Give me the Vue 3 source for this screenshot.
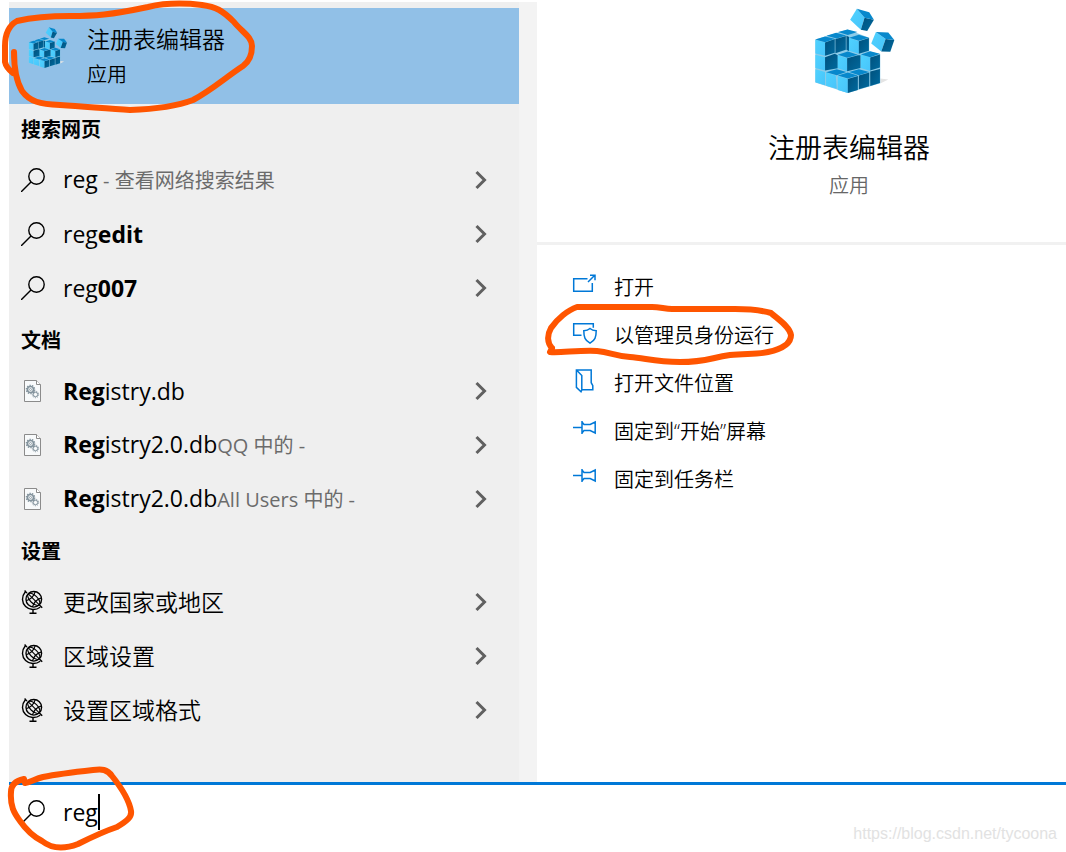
<template>
  <div class="page">
    <svg class="defs" aria-hidden="true">
      <symbol id="regedit" viewBox="75 25 245 260">
        <path fill="#e4e4e4" d="M273 236l24 3-24 12z" />
        <path fill="#8ccbe8" d="M79 119L175 89l65 25v40l33 9v87l-97 29-97-31z" />
        <polygon v-for="(f, i) in cubeFaces" :key="i" :points="f.points" :fill="f.fill" />
      </symbol>
      <linearGradient id="face-light" x1="0" y1="0" x2="1" y2="1">
        <stop offset="0" stop-color="#4fd2ff" />
        <stop offset="1" stop-color="#48c4fa" />
      </linearGradient>
      <linearGradient id="face-dark" x1="0" y1="0" x2="1" y2="1">
        <stop offset="0" stop-color="#00507c" />
        <stop offset="1" stop-color="#006a9f" />
      </linearGradient>

      <symbol id="search" viewBox="0 0 24 24">
        <g fill="none" stroke="#000" stroke-width="1.4">
          <circle cx="15.5" cy="8.5" r="7.7" />
          <path d="M10 14L0 24" />
        </g>
      </symbol>

      <symbol id="file" viewBox="0 0 24 24">
        <path fill="#f8fafb" stroke="#8b8b8b" d="M3.5 1.5h12l4 4v17h-16z" />
        <path fill="#fff" stroke="#8b8b8b" d="M15.5 1.5v4h4" />
        <g fill="none" stroke="#82929c">
          <circle cx="9.5" cy="10.5" r="3" stroke-width="1.6" />
          <circle cx="9.5" cy="10.5" r="4.2" stroke-width="1.2" stroke-dasharray="1.4 1.2" />
          <circle cx="9.5" cy="10.5" r="1" stroke-width=".8" />
          <circle cx="14.5" cy="15.5" r="2.2" stroke-width="1" />
          <circle cx="14.5" cy="15.5" r="3.2" stroke-width="1" stroke-dasharray="1.2 1" />
        </g>
      </symbol>

      <symbol id="globe" viewBox="0 0 24 24">
        <g fill="none" stroke="#000" stroke-width="1.1">
          <circle cx="12.800" cy="9.300" r="7.800" stroke-width="1.4" />
          <path stroke-width="1.4" d="M3.600 .5l2.400 2.600M4.200 2C.4 6.500.6 12.500 4.600 16.400c4 3.800 10 4.200 14.600.8M18.400 15l2.800 2.800M12 19.400v3.800M8.500 23.200h7" />
          <path d="M7.300 3.800l11 11" />
          <ellipse cx="12.800" cy="9.300" rx="7.800" ry="3.800" transform="rotate(45 12.8 9.3)" />
          <path d="M14.200 1.700Q12.500 8.500 5.200 10.700M20.400 7.900Q13.500 10 11.400 17" />
        </g>
      </symbol>

      <symbol id="open" viewBox="0 0 26 26">
        <g fill="none" stroke="#0078d7" stroke-width="1.5">
          <path d="M15.500 5.700H1.700v12.600h18.600V10" />
          <path d="M16 9L22.500 2.500M18 2.300h5v5" />
        </g>
      </symbol>

      <symbol id="admin" viewBox="0 0 26 26">
        <g fill="none" stroke="#0078d7" stroke-width="1.5">
          <path d="M9.500 14.200H1.700V2.700h19.600v4" />
          <path d="M18 7.500c-2 1.800-4 2.200-6.200 2.300 0 6.500 1.200 9.400 6.200 12.400 5-3 6.200-5.900 6.200-12.400-2.200-.1-4.200-.5-6.200-2.300z" />
        </g>
      </symbol>

      <symbol id="folder" viewBox="0 0 26 26">
        <g fill="none" stroke="#0078d7" stroke-width="1.500">
          <path d="M9.500 20.700h11.300v-4l-1.600-3V.9H4.400v17.500l4.600 4.400.8-1.800V6.500L4.700 1.200" />
        </g>
      </symbol>

      <symbol id="pin" viewBox="0 0 26 26">
        <path fill="none" stroke="#0078d7" stroke-width="1.500" d="M1 10.500h9M10 4v13M10 5l2 2.500h6.200l5-2.500v11l-5-2.500H12L10 16" />
      </symbol>
    </svg>

    <main class="results">
      <section class="list">
        <button class="best" type="button">
          <svg class="best-icon"><use href="#regedit" /></svg>
          <span class="best-text">
            <span class="best-name">注册表编辑器</span>
            <span class="best-kind">应用</span>
          </span>
          <svg class="mark mark-best" viewBox="0 0 260 116">
            <path d="M14 52C14 66 15 79 22 91C30 102 40 104 60 105C90 107 110 109 130 110C160 109 180 105 193 100C212 90 226 77 243 66C250 61 252 55 252 46C252 37 242 32 234 22C222 10 216 7 202 5C185 3 165 3 148 7C110 15 95 16 70 16C48 16 30 18 17 21C8 26 5 34 5 46V62C6 67 9 70 13 73" />
          </svg>
        </button>

        <template v-for="group in groups" :key="group.title">
          <h2 class="group-title">{{ group.title }}</h2>
          <button v-for="(item, i) in group.items" :key="i" class="row" type="button">
            <svg class="row-icon"><use :href="'#' + group.icon" /></svg>
            <span class="row-text" :class="{ chinese: group.icon === 'globe' }">
              <span v-for="(part, j) in item" :key="j" :class="part.style">{{ part.text }}</span>
            </span>
            <svg class="chevron" viewBox="0 0 12 20">
              <path d="M1.500 2l8 8-8 8" />
            </svg>
          </button>
        </template>
      </section>

      <section class="detail">
        <header class="hero">
          <svg class="hero-icon"><use href="#regedit" /></svg>
          <h1 class="hero-name">注册表编辑器</h1>
          <p class="hero-kind">应用</p>
        </header>
        <div class="actions">
          <button v-for="action in actions" :key="action.label" class="action" type="button">
            <svg class="action-icon"><use :href="'#' + action.icon" /></svg>
            <span>{{ action.label }}</span>
            <svg v-if="action.marked" class="mark mark-action" viewBox="540 300 260 70">
              <path d="M552 348L550 352C560 353 580 350 597 351C610 352 615 356 630 357C645 358 655 362 680 362C705 362 710 358 730 355C745 353 755 355 768 352C782 349 791 343 791 335C790 327 779 320 771 313C757 309 745 309 735 309H672C665 309 660 307 652 307H577C568 310 557 319 551 328C547 335 547 343 552 348" />
            </svg>
          </button>
        </div>
      </section>
    </main>

    <footer class="search-bar">
      <label class="search-label" for="query" aria-label="搜索">
        <svg class="row-icon"><use href="#search" /></svg>
      </label>
      <input id="query" v-model="query" class="search-input" type="text" autocomplete="off" spellcheck="false" />
      <span class="caret"></span>
      <svg class="mark mark-search" viewBox="0 760 140 92">
        <path d="M24 779C15 781 11 785 11 792C10 806 14 813 20 821C27 831 34 837 42 841C52 849 65 849 78 844C92 837 105 831 117 827C127 821 132 817 131 811C129 799 120 786 112 776C107 769 102 769 93 770C75 772 58 774 43 777C35 779 31 782 25 783" />
      </svg>
      <span class="watermark">https://blog.csdn.net/tycoona</span>
    </footer>
  </div>
</template>

<script setup>
import { ref } from 'vue'

const query = ref('reg')

const groups = [
  {
    title: '搜索网页',
    icon: 'search',
    items: [
      [{ text: 'reg' }, { text: ' - 查看网络搜索结果', style: 'note' }],
      [{ text: 'reg' }, { text: 'edit', style: 'strong' }],
      [{ text: 'reg' }, { text: '007', style: 'strong' }]
    ]
  },
  {
    title: '文档',
    icon: 'file',
    items: [
      [{ text: 'Reg', style: 'strong' }, { text: 'istry.db' }],
      [{ text: 'Reg', style: 'strong' }, { text: 'istry2.0.db' }, { text: 'QQ 中的 -', style: 'note' }],
      [{ text: 'Reg', style: 'strong' }, { text: 'istry2.0.db' }, { text: 'All Users 中的 -', style: 'note' }]
    ]
  },
  {
    title: '设置',
    icon: 'globe',
    items: [[{ text: '更改国家或地区' }], [{ text: '区域设置' }], [{ text: '设置区域格式' }]]
  }
]

const actions = [
  { icon: 'open', label: '打开' },
  { icon: 'admin', label: '以管理员身份运行', marked: true },
  { icon: 'folder', label: '打开文件位置' },
  { icon: 'pin', label: '固定到“开始”屏幕' },
  { icon: 'pin', label: '固定到任务栏' }
]

const light = 'url(#face-light)'
const dark = 'url(#face-dark)'
const top = '#0788cc'

// back to front
const cubeFaces = [
  { fill: top, points: '147,97 175,89 205,97 176,106' },
  { fill: dark, points: '172,108 180,112 180,154 172,150' },
  { fill: top, points: '112,108 141,99 171,107 143,116' },
  { fill: dark, points: '139,118 143,117 170,109 170,150 139,160' },
  { fill: light, points: '180,115 209,124 209,162 180,153' },
  { fill: dark, points: '209,124 239,115 239,153 209,162' },
  { fill: top, points: '180,114 209,105 239,114 209,123' },
  { fill: light, points: '79,120 108,128 108,168 79,161' },
  { fill: dark, points: '108,128 137,118 137,159 108,168' },
  { fill: top, points: '79,119 108,110 137,117 108,127' },
  { fill: light, points: '79,165 108,172 108,212 79,204' },
  { fill: dark, points: '108,172 137,162 146,166 146,205 108,212' },
  { fill: light, points: '146,166 174,175 174,214 146,205' },
  { fill: dark, points: '174,175 206,166 214,166 214,204 174,214' },
  { fill: top, points: '146,165 176,155 206,165 174,174' },
  { fill: light, points: '215,165 243,173 243,213 215,204' },
  { fill: dark, points: '243,173 272,164 272,203 243,212' },
  { fill: top, points: '215,164 243,154 272,162 243,172' },
  { fill: light, points: '79,208 108,216 108,256 79,247' },
  { fill: light, points: '111,218 140,227 143,266 111,257' },
  { fill: top, points: '111,217 143,208 172,216 143,226' },
  { fill: dark, points: '209,227 240,218 240,259 209,268' },
  { fill: top, points: '180,216 209,208 240,216 209,226' },
  { fill: dark, points: '243,215 272,207 272,249 243,258' },
  { fill: light, points: '146,228 176,237 176,279 146,270' },
  { fill: dark, points: '176,237 206,228 206,270 176,279' },
  { fill: top, points: '146,227 176,218 206,227 176,236' },
  { fill: light, points: '203,27 183,60 215,90 226,54' },
  { fill: dark, points: '226,54 254,60 234,94 215,90' },
  { fill: top, points: '203,27 240,38 254,60 226,54' },
  { fill: light, points: '260,97 246,131 276,155 289,118' },
  { fill: dark, points: '289,118 315,121 303,156 276,155' },
  { fill: top, points: '260,97 297,98 315,121 289,118' }
]
</script>

<style>
body {
  margin: 0;
  background: #fff;
}
</style>

<style scoped>
.page {
  display: flex;
  flex-direction: column;
  box-sizing: border-box;
  min-height: 100vh;
  padding: 2px 0 0 9px;
  overflow: hidden;
  color: #000;
  font-family: "Open Sans", "Noto Sans CJK SC", sans-serif;
  font-size: 20px;
}

.defs {
  position: absolute;
  width: 0;
  height: 0;
}

button {
  padding: 0;
  border: none;
  background: none;
  color: inherit;
  font: inherit;
  text-align: left;
  cursor: pointer;
}

.results {
  display: flex;
  flex: 1;
}

.list {
  display: flex;
  flex-direction: column;
  flex: 0 0 510px;
  padding-top: 6px;
  background: #efefef;
  border-right: 18px solid #f3f3f3;
}

/* best match */
.best {
  position: relative;
  display: flex;
  align-items: flex-start;
  height: 96px;
  padding: 14px 19px;
  box-sizing: border-box;
  background: #91c0e7;
  font-family: "Noto Sans CJK SC", sans-serif;
  font-weight: 350;
}

.best-icon {
  width: 40px;
  height: 42px;
  margin: 5px 19px 0 0;
}

.best-text {
  display: flex;
  flex-direction: column;
}

.best-name {
  font-size: 23px;
  line-height: 32px;
}

.best-kind {
  line-height: 40px;
}

/* groups */
.group-title {
  margin: 0;
  padding-left: 12px;
  font-family: "Noto Sans CJK SC", sans-serif;
  font-size: 20px;
  font-weight: 700;
  line-height: 49px;
}

.row {
  display: flex;
  align-items: center;
  height: 54px;
  padding: 0 32px 0 12px;
}

.row:hover {
  background: #e2e2e2;
}

.row-icon {
  flex: none;
  display: block;
  width: 24px;
  height: 24px;
}

.row-text {
  flex: 1;
  margin-left: 18px;
  font-size: 23px;
  line-height: 54px;
  white-space: pre;
}

.chinese {
  font-weight: 350;
}

.strong {
  font-weight: 700;
}

.note {
  color: #6b6b6b;
  font-size: 20px;
  font-weight: 400;
}

.chevron {
  width: 12px;
  height: 20px;
}

.chevron path {
  fill: none;
  stroke: #606060;
  stroke-width: 3;
}

/* right side */
.detail {
  flex: 1;
  background: #fff;
}

.hero {
  display: flex;
  flex-direction: column;
  align-items: center;
  box-sizing: border-box;
  height: 243px;
  padding: 6px 0 0 95px;
  border-bottom: 3px solid #f1f1f1;
  font-family: "Noto Sans CJK SC", sans-serif;
}

.hero-icon {
  width: 82px;
  height: 87px;
  margin-left: 12px;
}

.hero-name {
  margin: 34px 0 0;
  font-size: 27px;
  font-weight: 350;
  line-height: 36px;
}

.hero-kind {
  margin: 6px 0 0;
  color: #666;
  font-weight: 350;
  line-height: 28px;
}

.actions {
  display: flex;
  flex-direction: column;
  padding-top: 17px;
}

.action {
  position: relative;
  display: flex;
  align-items: center;
  gap: 16px;
  height: 48px;
  padding-left: 35px;
  font-weight: 350;
}

.action-icon {
  width: 26px;
  height: 26px;
}

/* search box */
.search-bar {
  position: relative;
  display: flex;
  align-items: center;
  box-sizing: border-box;
  height: 70px;
  padding: 0 0 14px 12px;
  border-top: 3px solid #0078d7;
  background: #fff;
}

.search-input {
  field-sizing: content;
  margin-left: 18px;
  padding: 0;
  border: none;
  outline: none;
  background: none;
  color: #000;
  font: inherit;
  font-size: 23px;
  line-height: 36px;
}

.caret {
  width: 2px;
  height: 36px;
  background: #000;
}

.watermark {
  position: absolute;
  right: 9px;
  bottom: 8px;
  color: #e2e2e2;
  font-family: "Liberation Sans", Arial, sans-serif;
  font-size: 16px;
  line-height: 20px;
}

/* hand drawn circles */
.mark {
  position: absolute;
  overflow: visible;
  pointer-events: none;
}

.mark path {
  fill: none;
  stroke: #ff5500;
  stroke-width: 6;
  stroke-linecap: round;
  stroke-linejoin: round;
}

.mark-best {
  top: -8px;
  left: -9px;
  width: 260px;
  height: 116px;
}

.mark-action {
  top: -10px;
  left: 3px;
  width: 260px;
  height: 70px;
}

.mark-search {
  bottom: 0;
  left: -9px;
  width: 140px;
  height: 92px;
}
</style>
